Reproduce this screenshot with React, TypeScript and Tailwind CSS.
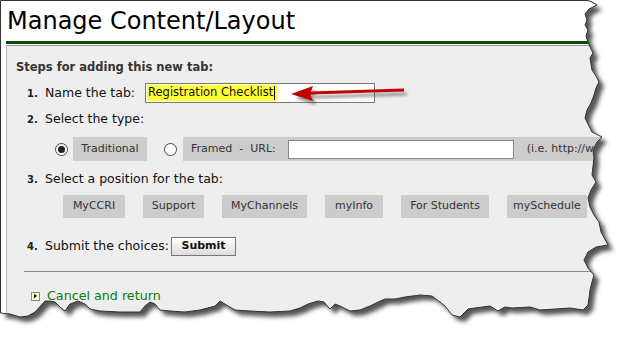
const EDGE: [number, number][] = [
  [0.5, 0.5], [588, 0.5], [592, 2], [597, 5], [589, 9], [585, 14], [587, 20], [585, 25], [588, 30], [586, 36],
  [588, 42], [590, 47], [593, 53], [590, 58], [591, 64], [592, 70], [596, 76], [599, 82], [596, 88], [594, 95],
  [591, 103], [587, 110], [585, 118], [589, 126], [592, 132], [602, 137], [597, 142], [593, 150], [594, 158],
  [593, 166], [592, 175], [596, 182], [591, 190], [588, 198], [590, 207], [594, 215], [599, 222], [601, 232],
  [608, 245], [596, 247], [588, 252], [584, 260], [588, 268], [594, 275], [592, 282], [590, 290], [589, 298],
  [588, 305], [583, 310], [570, 308], [555, 309], [540, 310], [530, 307], [512, 308], [505, 307], [498, 311],
  [490, 306], [475, 308], [468, 309], [460, 317], [452, 315], [445, 306], [440, 302], [432, 296], [420, 295],
  [405, 297], [395, 299], [385, 299], [378, 302], [370, 306], [360, 310], [350, 311], [340, 306], [335, 304],
  [330, 309], [324, 302], [318, 301], [308, 304], [300, 308], [290, 311], [270, 312], [250, 311], [235, 310],
  [228, 306], [220, 301], [215, 306], [200, 310], [185, 312], [170, 311], [160, 310], [155, 304], [150, 302],
  [145, 306], [140, 312], [120, 312], [100, 311], [90, 309], [85, 304], [78, 301], [70, 304], [65, 311],
  [60, 307], [55, 302], [50, 301], [45, 301], [35, 312], [28, 316], [20, 317], [10, 314], [0.5, 313],
]

const edgePath = 'M' + EDGE.map(([x, y]) => `${x} ${y}`).join('L') + 'Z'

const tabs = [
  { label: 'MyCCRI', w: 'w-[62px]' },
  { label: 'Support', w: 'w-[61px]' },
  { label: 'MyChannels', w: 'w-[85px]' },
  { label: 'myInfo', w: 'w-[58px]' },
  { label: 'For Students', w: 'w-[88px]' },
  { label: 'mySchedule', w: 'w-[80px]' },
]

function Step({ n, children }: { n: string; children: React.ReactNode }) {
  return (
    <div className="flex shrink-0 items-center">
      <span className="w-[18px] text-[10px] font-bold text-[#222]">{n}</span>
      <span className="text-[12.5px] text-[#111]">{children}</span>
    </div>
  )
}

function Radio({ checked }: { checked?: boolean }) {
  return (
    <span className="flex h-[13px] w-[13px] shrink-0 items-center justify-center rounded-full border border-[#444] bg-white">
      {checked && <span className="h-[7px] w-[7px] rounded-full bg-[#222]" />}
    </span>
  )
}

export default function App() {
  return (
    <div className="relative h-[341px] w-[630px] overflow-hidden bg-white font-['DejaVu_Sans','Verdana',sans-serif] text-[#111]">
      <div className="flex h-[320px] w-[610px] flex-col">
        <div className="flex h-[41px] items-center pl-[7px] pt-[1px] text-[24px] text-black">Manage Content/Layout</div>
        <div className="ml-[6px] h-[3px] bg-[#0b4a0b]" />
        <div className="ml-[6px] h-[2px] border-b border-[#999] bg-white" />
        <div className="ml-[6px] flex-1 border-l border-[#bbb] bg-[#eeeeee] pt-[2px]">
          <div className="flex h-[33px] items-center pl-[9px] pt-[6px] text-[11.5px] font-bold text-[#333]">
            Steps for adding this new tab:
          </div>

          <div className="flex h-[24px] items-center pl-[20px]">
            <Step n="1.">Name the tab:</Step>
            <div className="ml-[10px] flex h-[20px] w-[230px] shrink-0 items-center border border-[#777] bg-white px-px">
              <span className="flex h-[16px] items-center bg-[#ffff33] pl-[1px] pr-[2px] text-[11.5px] text-[#111]">
                Registration Checklist
                <span className="ml-px h-[14px] w-px bg-black" />
              </span>
            </div>
          </div>

          <div className="flex h-[28px] items-center pl-[20px]">
            <Step n="2.">Select the type:</Step>
          </div>

          <div className="flex h-[32px] items-center pl-[48px] text-[11px] text-[#333]">
            <Radio checked />
            <span className="ml-[5px] flex h-[24px] w-[74px] shrink-0 items-center justify-center bg-[#cccccc]">Traditional</span>
            <span className="ml-[17px] shrink-0">
              <Radio />
            </span>
            <span className="ml-[6px] flex h-[24px] flex-1 items-center bg-[#cccccc] pl-[8px] whitespace-nowrap">
              Framed&nbsp;&nbsp;-&nbsp;&nbsp;URL:
              <span className="ml-[12px] h-[19px] w-[226px] shrink-0 border border-[#888] bg-white" />
              <span className="ml-[13px]">(i.e. http://w</span>
            </span>
          </div>

          <div className="flex h-[28px] items-center pl-[20px]">
            <Step n="3.">Select a position for the tab:</Step>
          </div>

          <div className="flex h-[28px] gap-[18px] pl-[56px] pt-[2px] text-[11px] text-[#333]">
            {tabs.map((t) => (
              <span key={t.label} className={`flex h-[23px] ${t.w} shrink-0 items-center justify-center bg-[#cccccc]`}>
                {t.label}
              </span>
            ))}
          </div>

          <div className="flex h-[50px] items-center pl-[20px]">
            <Step n="4.">Submit the choices:</Step>
            <button className="ml-[2px] flex h-[19px] w-[65px] items-center justify-center border border-[#777] bg-gradient-to-b from-white to-[#dcdcdc] text-[11px] font-bold text-[#111]">
              Submit
            </button>
          </div>

          <div className="ml-[17px] h-px bg-[#888]" />

          <div className="flex h-[46px] items-center pl-[24px] pt-[2px]">
            <span className="flex h-[9px] w-[9px] items-center justify-center border border-[#888] bg-[#ffffcc]">
              <svg width="5" height="6" viewBox="0 0 5 6">
                <path d="M1 0.5 L4 3 L1 5.5 Z" fill="#111" />
              </svg>
            </span>
            <span className="ml-[7px] text-[12.7px] text-[#0a7a0a]">Cancel and return</span>
          </div>
        </div>
      </div>

      <svg className="pointer-events-none absolute inset-0" width="630" height="341" viewBox="0 0 630 341">
        <defs>
          <clipPath id="outside">
            <path clipRule="evenodd" d={'M0 0H630V341H0Z ' + edgePath} />
          </clipPath>
          <filter id="soft" x="-10%" y="-10%" width="120%" height="120%">
            <feGaussianBlur stdDeviation="2" />
          </filter>
          <filter id="arrowShadow" x="-20%" y="-100%" width="140%" height="300%">
            <feGaussianBlur stdDeviation="1.5" />
          </filter>
        </defs>
        <g clipPath="url(#outside)">
          <rect width="630" height="341" fill="#fff" />
          <path d={edgePath} transform="translate(5 5)" fill="#555" filter="url(#soft)" />
        </g>
        <path d={edgePath} fill="none" stroke="#333" strokeWidth="1" />

        <g transform="translate(3 4)" filter="url(#arrowShadow)" opacity="0.6">
          <path d="M312 93 L404 90" stroke="#555" strokeWidth="3" />
          <path d="M292 94 L313 86 L311 94 L313 101 Z" fill="#555" />
        </g>
        <path d="M310 93 L404 90" stroke="#c40000" strokeWidth="3" />
        <path d="M291 94 L313 86 L310 94 L313 101 Z" fill="#c40000" />
      </svg>
    </div>
  )
}
